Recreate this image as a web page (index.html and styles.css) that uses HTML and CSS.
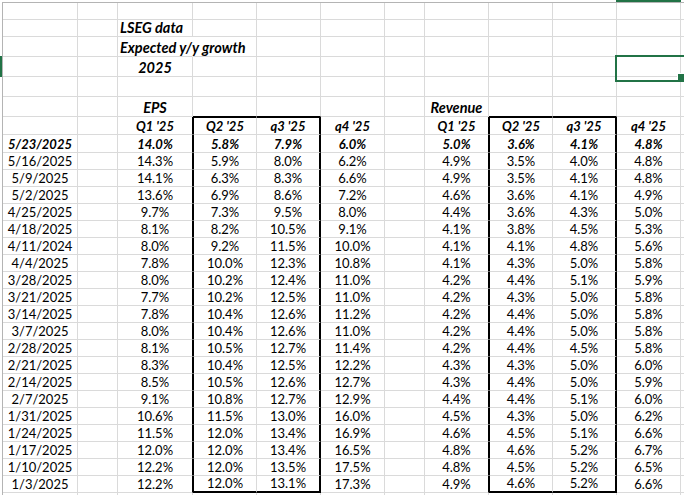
FILE: index.html
```html
<!DOCTYPE html>
<html>
<head>
<meta charset="utf-8">
<link rel="stylesheet" href="styles.css">
</head>
<body>
<div class="sheet">
  <div class="corner"></div>
  <div class="colhead"><div class="pad"></div><div class="mark"></div></div>
  <div class="rowhead"><div class="pad"></div><div class="mark"></div></div>
  <div class="grid">
    <div class="row"><div></div><div></div><div></div><div></div><div></div><div></div><div></div><div></div><div></div><div></div><div></div><div></div></div>
    <div class="row"><div></div><div></div><div class="bi big l">LSEG data</div><div></div><div></div><div></div><div></div><div></div><div></div><div></div><div></div><div></div></div>
    <div class="row h20"><div></div><div></div><div class="bi big l nr">Expected y/y growth</div><div></div><div></div><div></div><div></div><div></div><div></div><div></div><div></div><div></div></div>
    <div class="row h20"><div></div><div></div><div class="bi big">2025</div><div></div><div></div><div></div><div></div><div></div><div></div><div></div><div class="sel"></div><div></div></div>
    <div class="row h20"><div></div><div></div><div></div><div></div><div></div><div></div><div></div><div></div><div></div><div></div><div></div><div></div></div>
    <div class="row h20 btp"><div></div><div></div><div class="bi big">EPS</div><div></div><div></div><div></div><div></div><div class="bi big">Revenue</div><div></div><div></div><div></div><div></div></div>
    <div class="row h18 bx bt b"><div></div><div></div><div>Q1 '25</div><div>Q2 '25</div><div>q3 '25</div><div>q4 '25</div><div></div><div>Q1 '25</div><div>Q2 '25</div><div>q3 '25</div><div>q4 '25</div><div></div></div>
    <div class="row h18 bx b"><div>5/23/2025</div><div></div><div>14.0%</div><div>5.8%</div><div>7.9%</div><div>6.0%</div><div></div><div>5.0%</div><div>3.6%</div><div>4.1%</div><div>4.8%</div><div></div></div>
    <div class="row bx"><div>5/16/2025</div><div></div><div>14.3%</div><div>5.9%</div><div>8.0%</div><div>6.2%</div><div></div><div>4.9%</div><div>3.5%</div><div>4.0%</div><div>4.8%</div><div></div></div>
    <div class="row bx"><div>5/9/2025</div><div></div><div>14.1%</div><div>6.3%</div><div>8.3%</div><div>6.6%</div><div></div><div>4.9%</div><div>3.5%</div><div>4.1%</div><div>4.8%</div><div></div></div>
    <div class="row bx"><div>5/2/2025</div><div></div><div>13.6%</div><div>6.9%</div><div>8.6%</div><div>7.2%</div><div></div><div>4.6%</div><div>3.6%</div><div>4.1%</div><div>4.9%</div><div></div></div>
    <div class="row bx"><div>4/25/2025</div><div></div><div>9.7%</div><div>7.3%</div><div>9.5%</div><div>8.0%</div><div></div><div>4.4%</div><div>3.6%</div><div>4.3%</div><div>5.0%</div><div></div></div>
    <div class="row bx"><div>4/18/2025</div><div></div><div>8.1%</div><div>8.2%</div><div>10.5%</div><div>9.1%</div><div></div><div>4.1%</div><div>3.8%</div><div>4.5%</div><div>5.3%</div><div></div></div>
    <div class="row bx"><div>4/11/2024</div><div></div><div>8.0%</div><div>9.2%</div><div>11.5%</div><div>10.0%</div><div></div><div>4.1%</div><div>4.1%</div><div>4.8%</div><div>5.6%</div><div></div></div>
    <div class="row bx"><div>4/4/2025</div><div></div><div>7.8%</div><div>10.0%</div><div>12.3%</div><div>10.8%</div><div></div><div>4.1%</div><div>4.3%</div><div>5.0%</div><div>5.8%</div><div></div></div>
    <div class="row bx"><div>3/28/2025</div><div></div><div>8.0%</div><div>10.2%</div><div>12.4%</div><div>11.0%</div><div></div><div>4.2%</div><div>4.4%</div><div>5.1%</div><div>5.9%</div><div></div></div>
    <div class="row bx"><div>3/21/2025</div><div></div><div>7.7%</div><div>10.2%</div><div>12.5%</div><div>11.0%</div><div></div><div>4.2%</div><div>4.3%</div><div>5.0%</div><div>5.8%</div><div></div></div>
    <div class="row bx"><div>3/14/2025</div><div></div><div>7.8%</div><div>10.4%</div><div>12.6%</div><div>11.2%</div><div></div><div>4.2%</div><div>4.4%</div><div>5.0%</div><div>5.8%</div><div></div></div>
    <div class="row bx"><div>3/7/2025</div><div></div><div>8.0%</div><div>10.4%</div><div>12.6%</div><div>11.0%</div><div></div><div>4.2%</div><div>4.4%</div><div>5.0%</div><div>5.8%</div><div></div></div>
    <div class="row bx"><div>2/28/2025</div><div></div><div>8.1%</div><div>10.5%</div><div>12.7%</div><div>11.4%</div><div></div><div>4.2%</div><div>4.4%</div><div>4.5%</div><div>5.8%</div><div></div></div>
    <div class="row bx"><div>2/21/2025</div><div></div><div>8.3%</div><div>10.4%</div><div>12.5%</div><div>12.2%</div><div></div><div>4.3%</div><div>4.3%</div><div>5.0%</div><div>6.0%</div><div></div></div>
    <div class="row bx"><div>2/14/2025</div><div></div><div>8.5%</div><div>10.5%</div><div>12.6%</div><div>12.7%</div><div></div><div>4.3%</div><div>4.4%</div><div>5.0%</div><div>5.9%</div><div></div></div>
    <div class="row bx"><div>2/7/2025</div><div></div><div>9.1%</div><div>10.8%</div><div>12.7%</div><div>12.9%</div><div></div><div>4.4%</div><div>4.4%</div><div>5.1%</div><div>6.0%</div><div></div></div>
    <div class="row bx"><div>1/31/2025</div><div></div><div>10.6%</div><div>11.5%</div><div>13.0%</div><div>16.0%</div><div></div><div>4.5%</div><div>4.3%</div><div>5.0%</div><div>6.2%</div><div></div></div>
    <div class="row bx"><div>1/24/2025</div><div></div><div>11.5%</div><div>12.0%</div><div>13.4%</div><div>16.9%</div><div></div><div>4.6%</div><div>4.5%</div><div>5.1%</div><div>6.6%</div><div></div></div>
    <div class="row bx"><div>1/17/2025</div><div></div><div>12.0%</div><div>12.0%</div><div>13.4%</div><div>16.5%</div><div></div><div>4.8%</div><div>4.6%</div><div>5.2%</div><div>6.7%</div><div></div></div>
    <div class="row bx"><div>1/10/2025</div><div></div><div>12.2%</div><div>12.0%</div><div>13.5%</div><div>17.5%</div><div></div><div>4.8%</div><div>4.5%</div><div>5.2%</div><div>6.5%</div><div></div></div>
    <div class="row bx bb"><div>1/3/2025</div><div></div><div>12.2%</div><div>12.0%</div><div>13.1%</div><div>17.3%</div><div></div><div>4.9%</div><div>4.6%</div><div>5.2%</div><div>6.6%</div><div></div></div>
    <div class="row"><div></div><div></div><div></div><div></div><div></div><div></div><div></div><div></div><div></div><div></div><div></div><div></div></div>
  </div>
</div>
</body>
</html>
```
FILE: styles.css
```css
* { box-sizing: border-box; }
html, body { margin: 0; padding: 0; background: #fff; overflow: hidden; }
body {
  width: 684px;
  height: 495px;
  font-family: Lato, "Open Sans", sans-serif;
  font-size: 13px;
  color: #000;
}
.sheet {
  display: grid;
  grid-template-columns: 2px auto;
  grid-template-rows: 2px auto;
}
.colhead { display: flex; height: 2px; }
.colhead .pad { width: 614px; flex: none; }
.colhead .mark { width: 65px; flex: none; background: #217346; }
.rowhead { display: flex; flex-direction: column; width: 2px; }
.rowhead .pad { height: 54px; flex: none; }
.rowhead .mark { height: 21px; flex: none; background: #217346; }
.grid {
  border-left: 1px solid #b4b4b4;
  border-top: 1px solid #b4b4b4;
}
.row {
  display: grid;
  grid-template-columns: 75px 40px 75px 64px 64px 64px 40px 64px 64px 64px 64px 64px;
  height: 17px;
}
.row.h20 { height: 20px; }
.row.h18 { height: 18px; }
.row > div {
  border-right: 1px solid #dadada;
  border-bottom: 1px solid #dadada;
  display: flex;
  align-items: flex-end;
  justify-content: center;
  white-space: nowrap;
  line-height: 15px;
  min-width: 0;
}
.row.b > div, .row > .bi { font-weight: 700; font-style: italic; }
.row > .big { font-size: 14.5px; line-height: 16px; }
.row > .l { justify-content: flex-start; padding-left: 2px; }
.row > .nr { border-right-color: transparent; }

/* thick outline boxes around Q2/q3 columns */
.btp > div:nth-child(4), .btp > div:nth-child(5),
.btp > div:nth-child(9), .btp > div:nth-child(10) { border-bottom-color: #000; }
.bt > div:nth-child(4), .bt > div:nth-child(5),
.bt > div:nth-child(9), .bt > div:nth-child(10) { border-top: 1px solid #000; }
.bx > div:nth-child(3), .bx > div:nth-child(8) { border-right-color: #000; }
.bx > div:nth-child(4), .bx > div:nth-child(9) { border-left: 1px solid #000; }
.bx > div:nth-child(5), .bx > div:nth-child(10) { border-right: 2px solid #000; }
.bb > div:nth-child(4), .bb > div:nth-child(5),
.bb > div:nth-child(9), .bb > div:nth-child(10) { border-bottom: 2px solid #000; }

/* selected cell */
.row > .sel { position: relative; overflow: visible; }
.sel::after {
  content: "";
  position: absolute;
  left: -2px;
  top: -2px;
  width: 67px;
  height: 23px;
  border: 2px solid #217346;
}
.sel::before {
  content: "";
  position: absolute;
  left: 60px;
  top: 16px;
  width: 6px;
  height: 6px;
  background: #217346;
  border-left: 1px solid #fff;
  border-top: 1px solid #fff;
  z-index: 1;
}
```
